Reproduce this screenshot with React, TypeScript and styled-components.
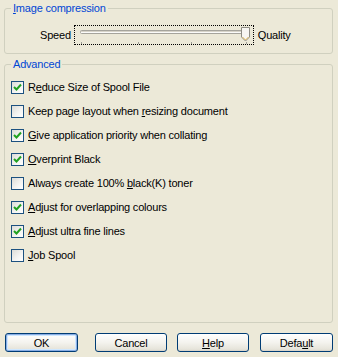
import React from 'react'
import styled, { createGlobalStyle } from 'styled-components'

const GlobalStyle = createGlobalStyle`
  html, body {
    margin: 0;
    padding: 0;
    background: #ece9d8;
  }
  body {
    font-family: 'Liberation Sans', Arial, sans-serif;
    font-size: 11px;
    letter-spacing: -0.2px;
    color: #000;
  }
`

const Page = styled.div`
  width: 338px;
  height: 357px;
  box-sizing: border-box;
  padding: 1px 5px 5px 4px;
  display: flex;
  flex-direction: column;
  background: #ece9d8;
`

const GroupBox = styled.fieldset<{ grow?: boolean; padTop: number }>`
  margin: 0;
  border: 1px solid #d0d0bf;
  border-radius: 3px;
  padding: ${(p) => p.padTop}px 6px 8px 6px;
  min-width: 0;
  flex: ${(p) => (p.grow ? '1' : 'none')};
  & + & {
    margin-top: 3px;
  }
`

const GroupTitle = styled.legend`
  color: #0046d5;
  line-height: 14px;
  padding: 0 2px;
  margin-left: 0;
`

const SliderRow = styled.div`
  display: flex;
  align-items: center;
  height: 20px;
  padding-left: 29px;
`

const SliderLabel = styled.span`
  line-height: 14px;
`

const SliderFocus = styled.div`
  width: 178px;
  height: 18px;
  margin: 0 4px 0 3px;
  border: 1px dotted #000;
`

const CheckList = styled.div`
  display: flex;
  flex-direction: column;
`

const CheckRow = styled.label`
  display: flex;
  align-items: center;
  height: 24px;
  gap: 4px;
`

const Box = styled.span`
  width: 11px;
  height: 11px;
  border: 1px solid #1c5180;
  background: linear-gradient(135deg, #dcdcd7 0%, #f5f5f3 60%, #ffffff 100%);
  display: flex;
  align-items: center;
  justify-content: center;
  flex: none;
`

const Underline = styled.span`
  text-decoration: underline;
`

const ButtonRow = styled.div`
  display: flex;
  margin-top: 10px;
  padding-left: 1px;
`

const Button = styled.button<{ isDefault?: boolean; w: number; gapAfter?: number }>`
  width: ${(p) => p.w}px;
  height: 19px;
  margin: 0 ${(p) => p.gapAfter ?? 0}px 0 0;
  padding: 0;
  font-family: 'Liberation Sans', Arial, sans-serif;
  font-size: 11px;
  letter-spacing: -0.2px;
  color: #000;
  border: 1px solid #003c74;
  border-radius: 3px;
  background: linear-gradient(180deg, #ffffff 0%, #f4f3ee 50%, #e6e4da 90%, #d6d0c5 100%);
  box-shadow: ${(p) =>
    p.isDefault
      ? 'inset 0 0 0 1px #89ade4, inset 0 0 0 2px #cee7ff'
      : 'none'};
`

const Check = () => (
  <svg width="9" height="9" viewBox="0 0 9 9">
    <path d="M1 4 L3.5 6.5 L8 1.5" fill="none" stroke="#21a121" strokeWidth="2" />
  </svg>
)

const Slider = () => (
  <svg width="178" height="18" viewBox="0 0 178 18" style={{ display: 'block' }}>
    <rect x="5.5" y="4.5" width="167" height="3" rx="1" fill="#fbfbf9" stroke="#a5a49c" />
    <line x1="6" y1="5.5" x2="172" y2="5.5" stroke="#d6d3c8" />
    {[6, 63, 116, 171].map((x) => (
      <line key={x} x1={x + 0.5} y1="16" x2={x + 0.5} y2="18" stroke="#a0a098" />
    ))}
    <path
      d="M166.5 1.5 H174.5 V11 L170.5 15 L166.5 11 Z"
      fill="#f7f6f2"
      stroke="#8e8d85"
    />
    <path d="M167.5 11 L170.5 14 L173.5 11" fill="none" stroke="#e0b95c" />
  </svg>
)

interface Item {
  pre: string
  key: string
  post: string
  checked: boolean
}

const items: Item[] = [
  { pre: 'R', key: 'e', post: 'duce Size of Spool File', checked: true },
  { pre: 'Keep page layout when ', key: 'r', post: 'esizing document', checked: false },
  { pre: '', key: 'G', post: 'ive application priority when collating', checked: true },
  { pre: '', key: 'O', post: 'verprint Black', checked: true },
  { pre: 'Always create 100% ', key: 'b', post: 'lack(K) toner', checked: false },
  { pre: '', key: 'A', post: 'djust for overlapping colours', checked: true },
  { pre: '', key: 'A', post: 'djust ultra fine lines', checked: true },
  { pre: '', key: 'J', post: 'ob Spool', checked: false },
]

export default function App() {
  return (
    <Page>
      <GlobalStyle />
      <GroupBox padTop={10}>
        <GroupTitle>
          <Underline>I</Underline>mage compression
        </GroupTitle>
        <SliderRow>
          <SliderLabel>Speed</SliderLabel>
          <SliderFocus>
            <Slider />
          </SliderFocus>
          <SliderLabel>Quality</SliderLabel>
        </SliderRow>
      </GroupBox>
      <GroupBox grow padTop={4}>
        <GroupTitle>Advanced</GroupTitle>
        <CheckList>
          {items.map((it, i) => (
            <CheckRow key={i}>
              <Box>{it.checked && <Check />}</Box>
              <span>
                {it.pre}
                <Underline>{it.key}</Underline>
                {it.post}
              </span>
            </CheckRow>
          ))}
        </CheckList>
      </GroupBox>
      <ButtonRow>
        <Button isDefault w={73} gapAfter={17}>OK</Button>
        <Button w={72} gapAfter={10}>Cancel</Button>
        <Button w={72} gapAfter={11}>
          <Underline>H</Underline>elp
        </Button>
        <Button w={73}>
          Defa<Underline>u</Underline>lt
        </Button>
      </ButtonRow>
    </Page>
  )
}
